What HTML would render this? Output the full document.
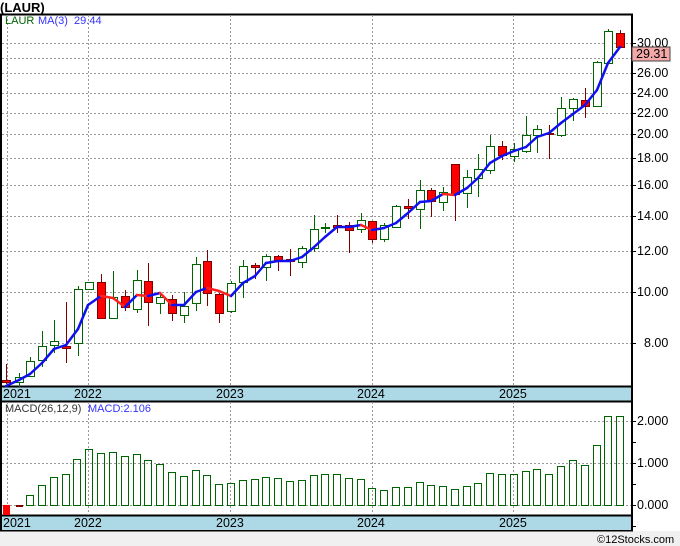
<!DOCTYPE html>
<html><head><meta charset="utf-8"><style>
html,body{margin:0;padding:0;background:#fff;width:680px;height:546px;overflow:hidden}
svg{display:block}
text{font-family:"Liberation Sans","DejaVu Sans",sans-serif;font-size:12.5px}
</style></head><body>
<svg id="s" width="680" height="546" xmlns="http://www.w3.org/2000/svg">
<rect x="0" y="531" width="680" height="15" fill="#f0f0f0"/>
<text x="0" y="12" style="font-size:13px;font-weight:bold" fill="#000">(LAUR)</text>
<rect x="1" y="14.5" width="631" height="516" fill="#fff" stroke="#000" stroke-width="2"/>
<rect x="2" y="387" width="629" height="14" fill="#add8e6"/>
<line x1="1" y1="386.5" x2="632" y2="386.5" stroke="#000" stroke-width="2"/>
<line x1="1" y1="401.5" x2="632" y2="401.5" stroke="#000" stroke-width="2"/>
<rect x="2" y="516" width="629" height="14" fill="#add8e6"/>
<line x1="1" y1="515.5" x2="632" y2="515.5" stroke="#000" stroke-width="2"/>
<g id="grid" stroke="#999" stroke-width="1" stroke-dasharray="2,2"></g>
<g id="plot"></g>
<g fill="#000">
<text x="3" y="398">2021</text><text x="74" y="398">2022</text><text x="216" y="398">2023</text><text x="357" y="398">2024</text><text x="499" y="398">2025</text>
<text x="3" y="527">2021</text><text x="74" y="527">2022</text><text x="216" y="527">2023</text><text x="357" y="527">2024</text><text x="499" y="527">2025</text>
</g>
<text x="5" y="24" fill="#006400" style="font-size:11px">LAUR</text>
<text x="38" y="24" fill="#3333ff" style="font-size:11px">MA(3)&#160; 29.44</text>
<text x="5" y="412" fill="#333" style="font-size:11px">MACD(26,12,9)</text>
<text x="88" y="412" fill="#3333ff" style="font-size:11px">MACD:2.106</text>
<g id="axis" fill="#000"></g>
<rect x="632" y="47" width="38" height="14" fill="#f4a8a8" stroke="#444" stroke-width="1"/>
<text x="636" y="58" fill="#000">29.31</text>
<text x="597" y="543" fill="#000" style="font-size:11px">©12Stocks.com</text>
</svg>
<script>
var NS="http://www.w3.org/2000/svg";
function el(p,t,a){var e=document.createElementNS(NS,t);for(var k in a)e.setAttribute(k,a[k]);document.getElementById(p).appendChild(e);return e;}
[43,58,73,93,113,134,158,185,216,251,292,343,421,463,505].forEach(function(y){el("grid","line",{x1:2,x2:631,y1:y+.5,y2:y+.5});});
[7,88,230,372,513].forEach(function(x){el("grid","line",{x1:x+.5,x2:x+.5,y1:15,y2:386});el("grid","line",{x1:x+.5,x2:x+.5,y1:402,y2:515});});
var L=[["30.00",43],["26.00",73],["24.00",93],["22.00",113],["20.00",134],["18.00",158],["16.00",185],["14.00",216],["12.00",251],["10.00",292],["8.00",343]];
L.forEach(function(a){var t=el("axis","text",{x:a[0].length==4?644:637,y:a[1]+4});t.textContent=a[0];el("axis","line",{x1:632,x2:636,y1:a[1]+.5,y2:a[1]+.5,stroke:"#000"});});
[["2.000",421],["1.000",463],["0.000",505]].forEach(function(a){var t=el("axis","text",{x:637,y:a[1]+4});t.textContent=a[0];el("axis","line",{x1:632,x2:636,y1:a[1]+.5,y2:a[1]+.5,stroke:"#000"});});
[442,484,526].forEach(function(y){el("axis","line",{x1:632,x2:636,y1:y+.5,y2:y+.5,stroke:"#000"});});
var C=[[6,380,382,364,384,1],[19,377,382,373,387,0],[30,361,376,357,376,0],[42,346,360,331,367,0],[54,341,345,320,353,0],[66,346,348,302,363,1],[78,289,343,286,356,0],[89,282,289,282,289,0],[101,282,318,274,318,1],[113,297,318,271,318,0],[125,296,307,290,311,1],[137,280,309,270,313,0],[148,281,302,263,326,1],[160,297,303,293,314,0],[172,299,313,295,321,1],[184,306,315,292,323,0],[196,264,303,257,311,0],[207,261,293,250,306,1],[219,294,313,293,323,1],[231,283,311,281,313,0],[243,266,282,260,298,0],[255,265,267,263,279,1],[266,256,267,254,281,0],[278,256,261,255,271,1],[290,259,261,249,276,1],[302,248,262,246,268,0],[314,229,248,215,252,0],[325,227,228,223,233,0],[337,225,227,215,233,1],[349,225,230,222,253,1],[361,220,229,213,233,0],[372,221,239,221,243,1],[384,225,239,223,242,0],[396,206,227,205,227,0],[408,206,208,199,219,1],[420,190,209,180,229,0],[431,190,201,188,217,1],[443,192,202,187,211,0],[455,164,194,164,221,1],[467,177,193,170,208,0],[478,169,178,154,197,0],[490,146,170,135,174,0],[502,146,155,141,160,1],[514,149,156,143,162,0],[526,135,151,116,153,0],[537,129,135,125,153,0],[549,133,134,125,159,1],[561,108,135,97,137,0],[573,99,108,98,121,0],[585,100,106,88,118,1],[597,62,106,61,106,0],[608,31,63,29,63,0],[620,33,47,30,47,1]];
C.forEach(function(c){var x=c[0];var col=c[5]?"#800000":"#006400";
el("plot","line",{x1:x+.5,x2:x+.5,y1:c[3],y2:c[4],stroke:col,"stroke-width":1});
el("plot","rect",{x:x-3.5,y:c[1]+.5,width:8,height:Math.max(1,c[2]-c[1]),fill:c[5]?"#ff0000":"#fff",stroke:col,"stroke-width":1});});
var M=[[6,386],[19,380],[30,374],[42,363],[54,349],[66,345],[78,329],[88,305],[101,296],[113,298],[125,307],[137,295],[148,296],[160,293],[172,305],[184,305],[196,292],[207,288],[219,291],[231,296],[243,283],[255,276],[266,263],[278,261],[290,261],[302,257],[313,248],[325,237],[337,227],[349,227],[361,225],[372,230],[384,228],[396,223],[408,213],[420,202],[431,201],[443,194],[455,195],[467,188],[478,178],[490,163],[502,156],[514,151],[526,147],[537,137],[549,133],[561,123],[573,114],[585,105],[597,90],[608,63],[620,47]];
for(var i=1;i<M.length;i++){var a=M[i-1],b=M[i];el("plot","line",{x1:a[0],y1:a[1],x2:b[0],y2:b[1],stroke:b[1]>a[1]?"#ff2020":"#1010ee","stroke-width":2.5,"stroke-linecap":"round"});}
var H=[[6,515],[19,506],[30,495],[42,485],[54,477],[66,474],[77,459],[89,449],[101,453],[113,452],[125,456],[137,454],[148,460],[160,464],[172,472],[184,476],[196,470],[207,475],[219,484],[231,483],[243,480],[255,479],[266,477],[278,478],[290,481],[302,480],[314,475],[325,474],[337,474],[349,478],[361,479],[372,488],[384,490],[396,487],[408,487],[420,482],[431,485],[443,486],[455,489],[467,486],[478,483],[490,473],[502,474],[514,474],[526,471],[537,469],[549,474],[561,466],[573,460],[585,465],[597,445],[608,416],[620,416]];
H.forEach(function(h,i){var x=h[0];
if(i==0){el("plot","rect",{x:x-3,y:505,width:7,height:10,fill:"#ff0000"});return;}
if(i==1){el("plot","rect",{x:x-3,y:505,width:7,height:2,fill:"#800000"});return;}
el("plot","rect",{x:x-3.5,y:h[1]+.5,width:7,height:505-h[1],fill:"none",stroke:"#006400","stroke-width":1});});
</script>
</body></html>
